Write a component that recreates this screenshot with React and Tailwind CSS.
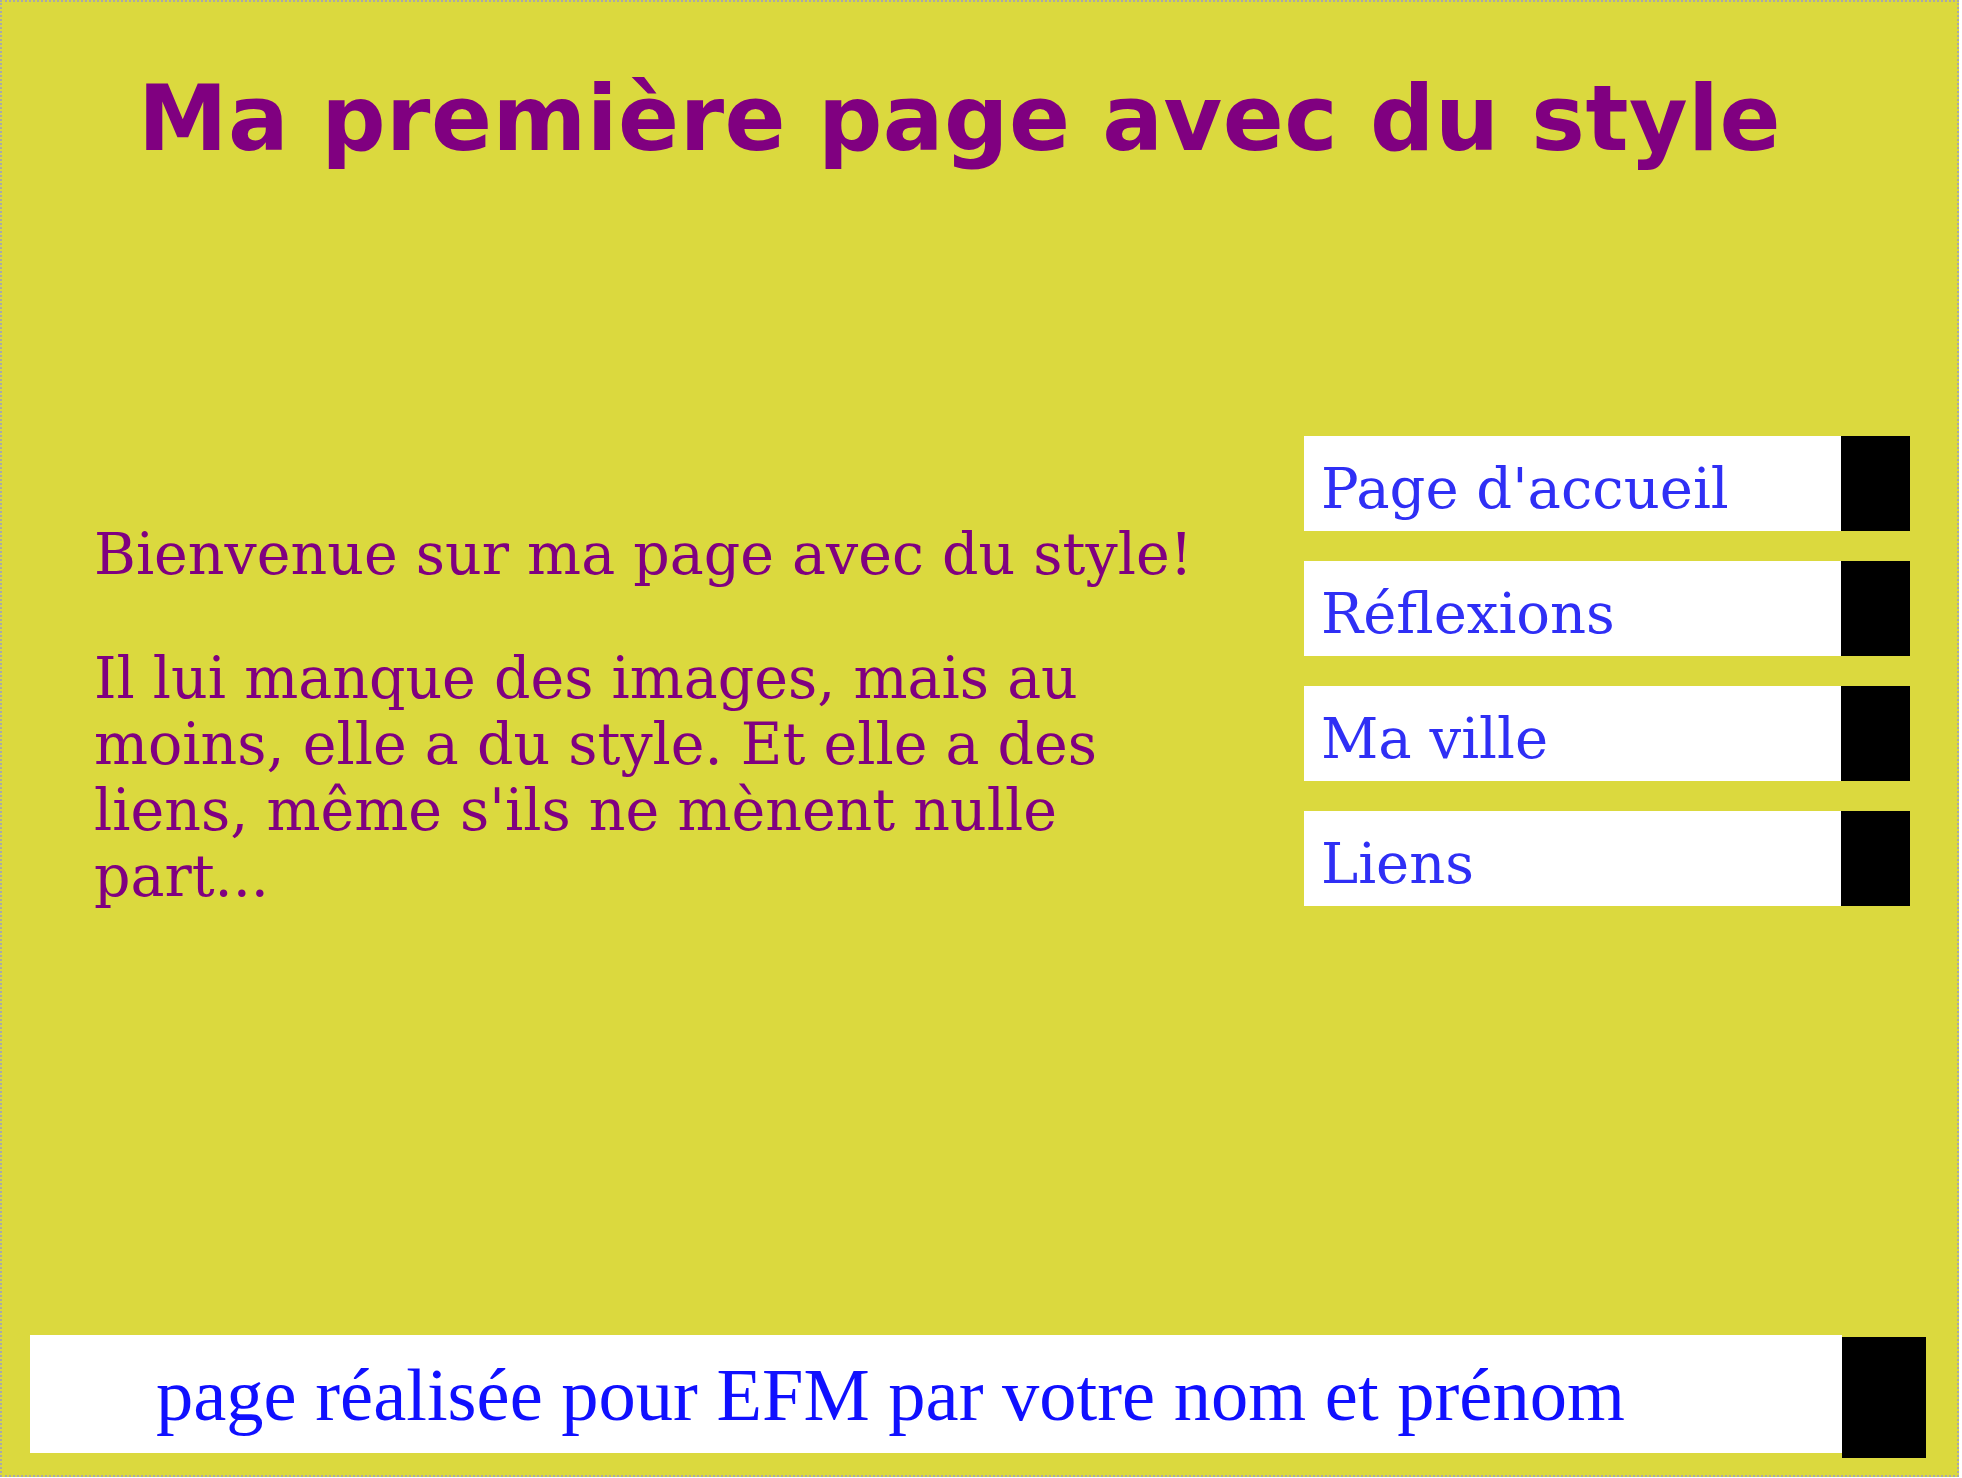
import React from 'react';

const liens = ["Page d'accueil", 'Réflexions', 'Ma ville', 'Liens'];

const App = () => {
  return (
    <div className="w-[1959px] h-[1477px] flex flex-col bg-[#dbd93e] border-2 border-dotted border-[#a9a9a9]">
      {/* titre */}
      <h1 className="mt-[72px] pl-[136px] text-[90px] leading-[90px] font-bold tracking-[0.5px] text-[#800080] font-['DejaVu_Sans',Verdana,sans-serif] whitespace-nowrap">
        Ma première page avec du style
      </h1>

      {/* contenu */}
      <div className="flex items-start mt-[272px]">
        <div className="w-[1150px] ml-[92px] mt-[85px] text-[57px] leading-[66px] text-[#800080] font-['DejaVu_Serif',Georgia,serif]">
          <p className="whitespace-nowrap">Bienvenue sur ma page avec du style!</p>
          <p className="mt-[58px] w-[1090px]">
            Il lui manque des images, mais au moins, elle a du style. Et elle a des liens, même s'ils ne mènent nulle part...
          </p>
        </div>
        <ul className="ml-auto mr-[47px] flex flex-col gap-[30px]">
          {liens.map(lien => (
            <li key={lien} className="w-[606px] h-[95px] bg-white border-r-[69px] border-black">
              <a href="#" className="block pl-[17px] pt-[20px] text-[56px] leading-[66px] text-[#2f2ff5] font-['DejaVu_Serif',Georgia,serif] whitespace-nowrap">
                {lien}
              </a>
            </li>
          ))}
        </ul>
      </div>

      {/* pied de page */}
      <div className="mt-auto mb-[17px] ml-[28px] flex items-start">
        <div className="w-[1812px] h-[118px] bg-white pl-[126px] text-[74.5px] leading-[120px] text-[#1010ff] font-['Liberation_Serif','Times_New_Roman',serif] whitespace-nowrap">
          page réalisée pour EFM par votre nom et prénom
        </div>
        <div className="w-[84px] h-[121px] mt-[2px] bg-black"></div>
      </div>
    </div>
  );
};

export default App;
